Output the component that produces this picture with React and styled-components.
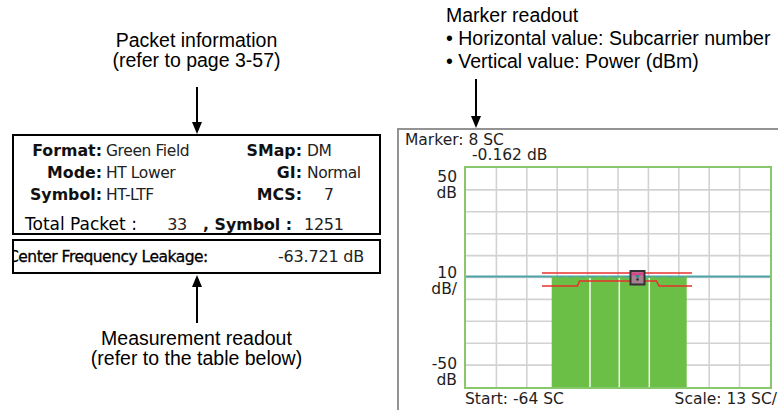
import React from "react";
import styled, { createGlobalStyle } from "styled-components";

const Global = createGlobalStyle`
  html, body { margin: 0; padding: 0; background: #fff; }
  body { width: 778px; height: 410px; overflow: hidden; }
`;

const Page = styled.div`
  width: 778px;
  height: 410px;
  display: grid;
  grid-template-columns: 393px 1fr;
  column-gap: 4px;
  overflow: hidden;
  background: #fff;
`;

const LeftCol = styled.div`
  display: flex;
  flex-direction: column;
  align-items: center;
  padding-top: ${(p) => p.$top}px;
`;

const Caption = styled.div`
  font-family: "Liberation Sans", Arial, sans-serif;
  font-size: 19.5px;
  line-height: ${(p) => p.$lh || 20}px;
  color: #000;
  text-align: ${(p) => p.$align || "center"};
  white-space: nowrap;
  padding-left: ${(p) => p.$indent || 0}px;
  margin-top: ${(p) => p.$mt || 0}px;
`;

const ArrowWrap = styled.div`
  width: 12px;
  height: ${(p) => p.$h}px;
  margin-top: ${(p) => p.$mt || 0}px;
  margin-left: ${(p) => p.$ml || 0}px;
  flex: none;
  svg { display: block; }
`;

const InfoBox = styled.div`
  box-sizing: border-box;
  width: 369px;
  height: 101px;
  border: 2px solid #000;
  padding-top: 4px;
  font-family: "DejaVu Sans", Verdana, sans-serif;
  color: #111;
  display: flex;
  flex-direction: column;
`;

const InfoGrid = styled.div`
  display: grid;
  grid-template-columns: 88px 144px 56px 1fr;
  grid-auto-rows: 22px;
  align-items: center;
`;

const Label = styled.span`
  font-weight: bold;
  font-size: 15.8px;
  line-height: 22px;
  text-align: right;
  white-space: nowrap;
  color: #111;
`;

const Value = styled.span`
  font-size: 15.5px;
  letter-spacing: -0.4px;
  line-height: 22px;
  padding-left: ${(p) => p.$pad || 4}px;
  white-space: nowrap;
  color: #222;
`;

const TotalRow = styled.div`
  display: flex;
  align-items: baseline;
  margin-top: 10px;
  padding-left: 11px;
  line-height: 16px;
  white-space: nowrap;
`;

const TotalLabel = styled.span`
  font-size: 17px;
  width: 120px;
  color: #000;
`;

const TotalNum = styled.span`
  font-size: 16px;
  letter-spacing: -0.3px;
  width: ${(p) => p.$w}px;
  text-align: ${(p) => p.$align || "left"};
  margin-left: ${(p) => p.$ml || 0}px;
  color: #222;
`;

const TotalSym = styled.span`
  font-size: 15.8px;
  font-weight: bold;
  margin-left: 16px;
`;

const LeakBox = styled.div`
  box-sizing: border-box;
  width: 369px;
  height: 35px;
  margin-top: 4px;
  border: 2px solid #000;
  overflow: hidden;
  display: flex;
  align-items: center;
  padding-right: 15px;
  font-family: "DejaVu Sans", Verdana, sans-serif;
  white-space: nowrap;
`;

const LeakLabel = styled.span`
  font-size: 15.5px;
  letter-spacing: -0.5px;
  margin-left: -6px;
  color: #000;
  -webkit-text-stroke: 0.3px #000;
`;

const LeakValue = styled.span`
  font-size: 16px;
  letter-spacing: -0.2px;
  margin-left: auto;
  color: #222;
`;

const RightCol = styled.div`
  display: flex;
  flex-direction: column;
  padding-top: 4px;
  min-width: 0;
`;

const Frame = styled.div`
  flex: 1;
  margin-top: 0;
  border-top: 2px solid #939393;
  border-left: 2px solid #939393;
  font-family: "DejaVu Sans", Verdana, sans-serif;
  font-size: 15.5px;
  color: #1e1e1e;
  display: flex;
  flex-direction: column;
`;

const ChartText = styled.div`
  line-height: 15px;
  padding-left: ${(p) => p.$indent}px;
  white-space: nowrap;
`;

const Header = styled.div`
  padding-top: 3px;
`;

const ChartRow = styled.div`
  display: flex;
  margin-top: 3px;
`;

const YAxis = styled.div`
  width: 65px;
  height: 223px;
  box-sizing: border-box;
  padding-right: 7px;
  display: flex;
  flex-direction: column;
  align-items: flex-end;
  text-align: right;
`;

const YGroup = styled.div`
  line-height: 16px;
  margin-top: ${(p) => p.$mt}px;
  white-space: nowrap;
`;

const Plot = styled.div`
  box-sizing: border-box;
  width: 308px;
  height: 223px;
  border: 2px solid #88c86c;
  flex: none;
  svg { display: block; }
`;

const Footer = styled.div`
  display: flex;
  justify-content: space-between;
  padding-left: 66px;
  padding-right: 1px;
  margin-top: 3px;
  line-height: 15px;
  white-space: nowrap;
`;

function DownArrow({ h }) {
  return (
    <svg width="12" height={h} viewBox={`0 0 12 ${h}`}>
      <rect x="5" y="0" width="2" height={h - 10} fill="#000" />
      <polygon points={`1,${h - 12} 11,${h - 12} 6,${h}`} fill="#000" />
    </svg>
  );
}

function UpArrow({ h }) {
  return (
    <svg width="12" height={h} viewBox={`0 0 12 ${h}`}>
      <polygon points="6,0 1,12 11,12" fill="#000" />
      <rect x="5" y="10" width="2" height={h - 10} fill="#000" />
    </svg>
  );
}

function Chart() {
  const W = 304;
  const H = 219;
  const cols = Array.from({ length: 9 }, (_, i) => (W / 10) * (i + 1));
  const rows = Array.from({ length: 9 }, (_, i) => (H / 10) * (i + 1));
  const grid = "#d2d2d2";
  const green = "#6bbf46";
  const red = "#e8302c";
  return (
    <svg width={W} height={H} viewBox={`0 0 ${W} ${H}`}>
      {cols.map((x) => (
        <line key={"v" + x} x1={x} y1="0" x2={x} y2={H} stroke={grid} strokeWidth="1.6" />
      ))}
      {rows.map((y) => (
        <line key={"h" + y} x1="0" y1={y} x2={W} y2={y} stroke={grid} strokeWidth="1.6" />
      ))}
      <rect x="85.7" y="109" width="135" height={H - 109} fill={green} />
      {[124, 153.3, 183.3].map((x) => (
        <line key={"g" + x} x1={x} y1="110" x2={x} y2={H} stroke="#f4fbf0" strokeWidth="1.5" />
      ))}
      <line x1="0" y1="108.5" x2={W} y2="108.5" stroke="#4ea3a6" strokeWidth="2" />
      <line x1="86" y1="109" x2="221" y2="109" stroke={green} strokeWidth="1" strokeDasharray="5 6" />
      <line x1="76" y1="105" x2="226" y2="105" stroke={red} strokeWidth="1.5" />
      <polyline
        points="76,118 111.5,118 113.5,113 190.5,113 193,118 226,118"
        fill="none"
        stroke={red}
        strokeWidth="1.5"
      />
      <rect x="164.5" y="103" width="14" height="13.5" fill="#a98292" stroke="#352f3a" strokeWidth="2" />
      <rect x="166" y="104.5" width="11" height="3" fill="#d8458a" />
      <polygon points="169,107 174,107 171.5,111" fill="#2d8f94" />
      <circle cx="171.5" cy="111.5" r="1.3" fill="#333" />
    </svg>
  );
}

export default function App() {
  return (
    <>
      <Global />
      <Page>
        <LeftCol $top={30}>
          <Caption>
            Packet information
            <br />
            (refer to page 3-57)
          </Caption>
          <ArrowWrap $h={47} $mt={17}>
            <DownArrow h={47} />
          </ArrowWrap>
          <InfoBox>
            <InfoGrid>
              <Label>Format:</Label>
              <Value>Green Field</Value>
              <Label>SMap:</Label>
              <Value $pad={5}>DM</Value>
              <Label>Mode:</Label>
              <Value>HT Lower</Value>
              <Label>GI:</Label>
              <Value $pad={5}>Normal</Value>
              <Label>Symbol:</Label>
              <Value>HT-LTF</Value>
              <Label>MCS:</Label>
              <Value $pad={22}>7</Value>
            </InfoGrid>
            <TotalRow>
              <TotalLabel>Total Packet :</TotalLabel>
              <TotalNum $w={42} $align="right">33</TotalNum>
              <TotalSym>, Symbol :</TotalSym>
              <TotalNum $w={50} $ml={12}>1251</TotalNum>
            </TotalRow>
          </InfoBox>
          <LeakBox>
            <LeakLabel>Center Frequency Leakage:</LeakLabel>
            <LeakValue>-63.721 dB</LeakValue>
          </LeakBox>
          <ArrowWrap $h={48} $mt={1}>
            <UpArrow h={48} />
          </ArrowWrap>
          <Caption $mt={5}>
            Measurement readout
            <br />
            (refer to the table below)
          </Caption>
        </LeftCol>
        <RightCol>
          <Caption $align="left" $lh={23} $indent={49}>
            Marker readout
            <br />• Horizontal value: Subcarrier number
            <br />• Vertical value: Power (dBm)
          </Caption>
          <ArrowWrap $h={49} $mt={6} $ml={73}>
            <DownArrow h={49} />
          </ArrowWrap>
          <Frame>
            <Header>
              <ChartText $indent={6}>Marker: 8 SC</ChartText>
              <ChartText $indent={73}>-0.162 dB</ChartText>
            </Header>
            <ChartRow>
              <YAxis>
                <YGroup $mt={3}>
                  50
                  <br />
                  dB
                </YGroup>
                <YGroup $mt={64}>
                  10
                  <br />
                  dB/
                </YGroup>
                <YGroup $mt={59}>
                  -50
                  <br />
                  dB
                </YGroup>
              </YAxis>
              <Plot>
                <Chart />
              </Plot>
            </ChartRow>
            <Footer>
              <span>Start: -64 SC</span>
              <span>Scale: 13 SC/</span>
            </Footer>
          </Frame>
        </RightCol>
      </Page>
    </>
  );
}
